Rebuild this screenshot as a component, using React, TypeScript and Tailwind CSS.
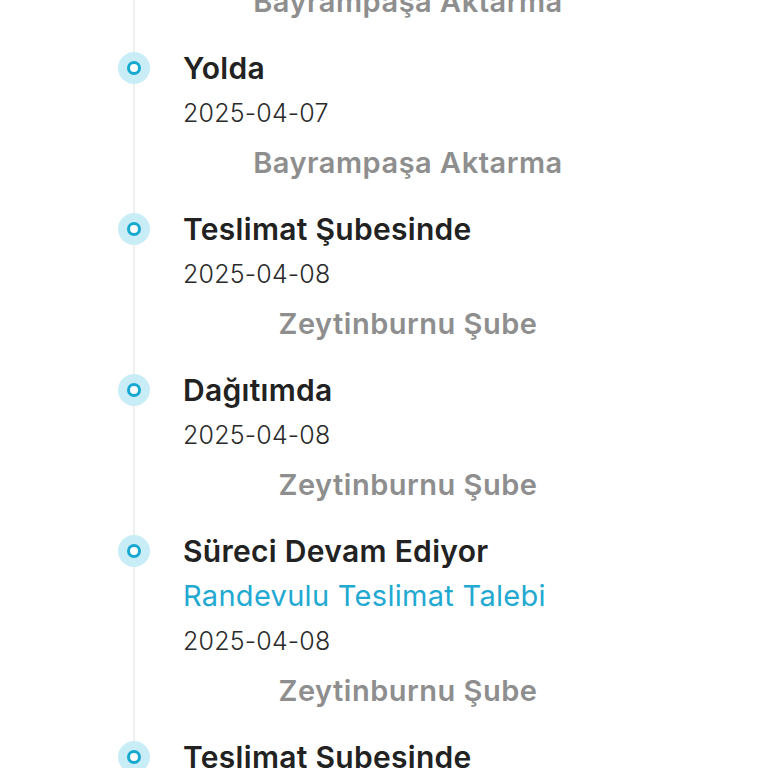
type Step = {
  title: string
  note?: string
  date: string
  place: string
}

const steps: Step[] = [
  { title: 'Yolda', date: '2025-04-07', place: 'Bayrampaşa Aktarma' },
  { title: 'Teslimat Şubesinde', date: '2025-04-08', place: 'Zeytinburnu Şube' },
  { title: 'Dağıtımda', date: '2025-04-08', place: 'Zeytinburnu Şube' },
  {
    title: 'Süreci Devam Ediyor',
    note: 'Randevulu Teslimat Talebi',
    date: '2025-04-08',
    place: 'Zeytinburnu Şube',
  },
  { title: 'Teslimat Şubesinde', date: '2025-04-08', place: 'Zeytinburnu Şube' },
]

const Dot = () => (
  <div className="mt-[6px] flex h-[32px] w-[32px] shrink-0 items-center justify-center rounded-full bg-[#c9edf7]">
    <div className="h-[14px] w-[14px] rounded-full border-[3px] border-[#17a8d1] bg-white" />
  </div>
)

const Place = ({ text }: { text: string }) => (
  <div className="h-[50px] w-[450px] text-center text-[29px] font-semibold leading-[50px] tracking-[0.5px] text-[#8e8e8e]">
    {text}
  </div>
)

const App = () => {
  return (
    <div
      className="relative h-[768px] w-[768px] overflow-hidden bg-white"
      style={{ fontFamily: 'Inter, "Noto Sans", sans-serif' }}
    >
      {/* NOTE - timeline rail */}
      <div className="absolute bottom-0 left-[133px] top-0 w-[2px] bg-[#efefef]" />

      <div className="relative">
        {/* NOTE - tail of the previous step, cut off by the top edge */}
        <div className="-mt-[23px] pb-[19px] pl-[183px]">
          <Place text="Bayrampaşa Aktarma" />
        </div>

        {steps.map((step, i) => (
          <div key={i} className="flex gap-[33px] pb-[19px] pl-[118px]">
            <Dot />
            <div className="flex flex-col">
              <div className="h-[44px] whitespace-nowrap text-[30px] font-semibold leading-[44px] tracking-[0.3px] text-[#222222]">
                {step.title}
              </div>
              {step.note && (
                <div className="h-[45px] whitespace-nowrap text-[29px] leading-[45px] tracking-[0.3px] text-[#22a9d2]">
                  {step.note}
                </div>
              )}
              <div className="h-[46px] text-[25px] font-light leading-[46px] tracking-[0.2px] text-[#2a2a2a]">
                {step.date}
              </div>
              <div className="mt-[2px]">
                <Place text={step.place} />
              </div>
            </div>
          </div>
        ))}
      </div>
    </div>
  )
}

export default App
